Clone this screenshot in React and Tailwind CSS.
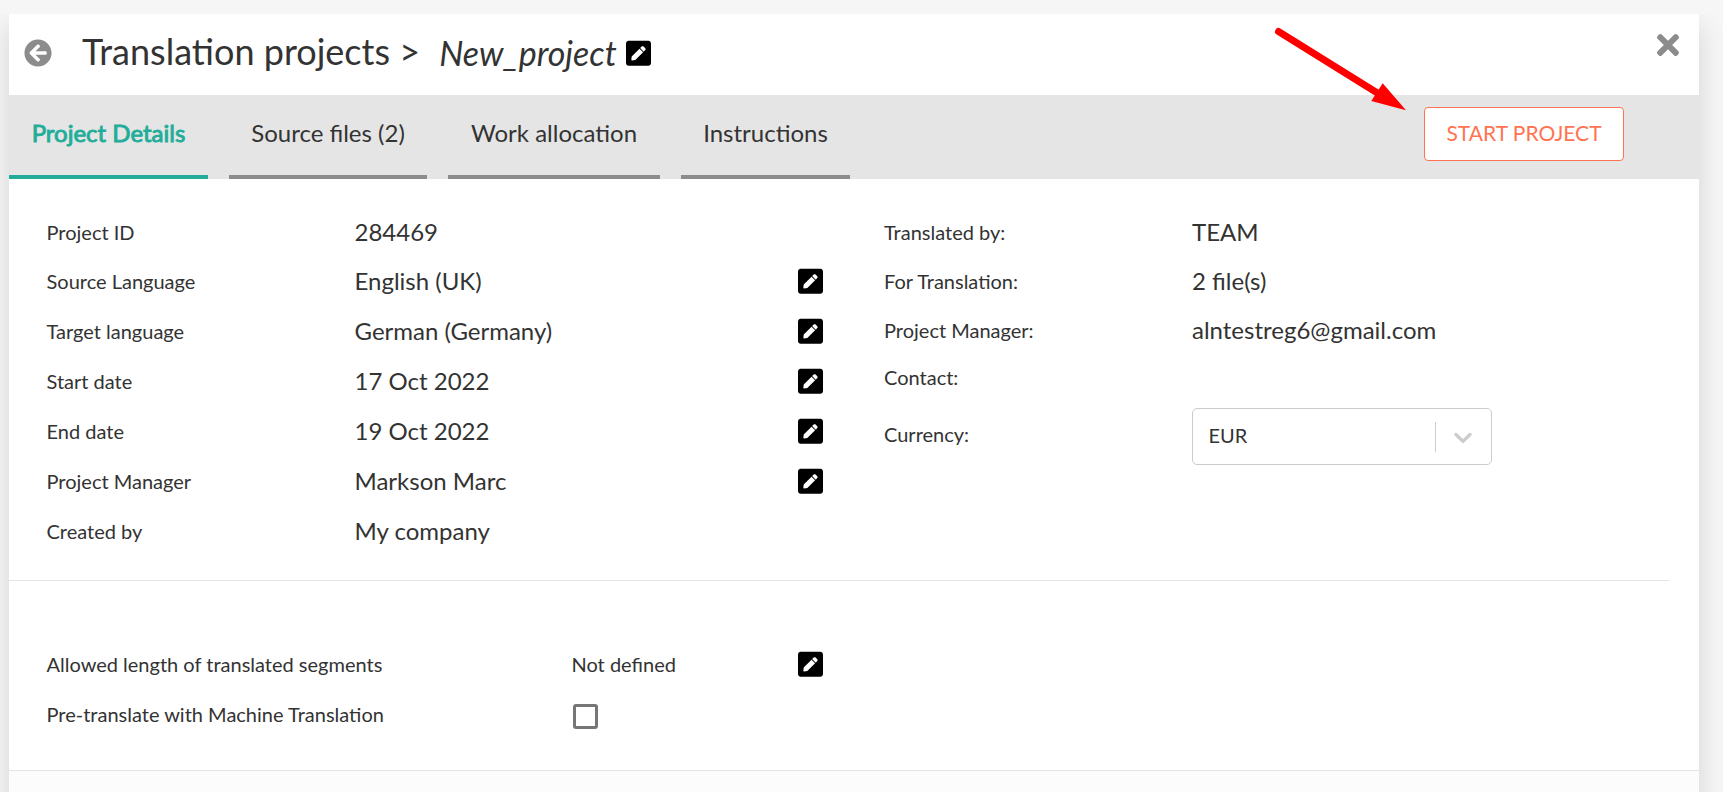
import { FaArrowCircleLeft, FaPenSquare, FaTimes } from "react-icons/fa";

const tabs = [
  { label: "Project Details", active: true, width: "w-[199px]" },
  { label: "Source files (2)", width: "w-[198px]" },
  { label: "Work allocation", width: "w-[212px]" },
  { label: "Instructions", width: "w-[169px]" },
];

const details = [
  { label: "Project ID", value: "284469", height: "h-[49px]" },
  { label: "Source Language", value: "English (UK)", editable: true, height: "h-[50px]" },
  { label: "Target language", value: "German (Germany)", editable: true, height: "h-[50px]" },
  { label: "Start date", value: "17 Oct 2022", editable: true, height: "h-[50px]" },
  { label: "End date", value: "19 Oct 2022", editable: true, height: "h-[50px]" },
  { label: "Project Manager", value: "Markson Marc", editable: true, height: "h-[50px]" },
  { label: "Created by", value: "My company", height: "h-[50px]" },
];

const summary = [
  { label: "Translated by:", value: "TEAM", height: "h-[49px]" },
  { label: "For Translation:", value: "2 file(s)", height: "h-[49px]" },
  { label: "Project Manager:", value: "alntestreg6@gmail.com", height: "h-[49px]" },
  { label: "Contact:", value: "", height: "h-[45px]" },
];

function EditButton() {
  return (
    <button className="ml-px shrink-0" aria-label="Edit">
      <FaPenSquare className="h-[28.6px] w-[25px] text-black" />
    </button>
  );
}

export default function App() {
  return (
    <div className="flex h-[792px] flex-col bg-[#f6f6f6] pt-[14px] font-['Lato',sans-serif] text-[20px] text-[#333]">
      <div className="min-h-0 flex-1 overflow-hidden pr-6 pl-[9px]">
        <div className="relative flex h-[900px] flex-col bg-white shadow-[0_12px_26px_rgba(0,0,0,0.14)]">
          <header className="flex h-[81px] shrink-0 items-start justify-between px-[15px]">
            <div className="flex h-[77px] items-center">
              <FaArrowCircleLeft className="size-7 text-[#8c8c8c]" />
              <h1 className="-mt-1 ml-[30px] text-[36px]">Translation projects &gt;</h1>
              <em className="mr-[8px] ml-[19px] text-[34px]">New_project</em>
              <span className="mt-px flex">
                <EditButton />
              </span>
            </div>
            <FaTimes className="mt-[15px] size-8 text-[#8c8c8c]" />
          </header>

          <nav className="flex h-[84px] shrink-0 items-start justify-between bg-[#e5e5e5] pr-[75px]">
            <div className="flex gap-[21px]">
              {tabs.map((t) => (
                <div
                  key={t.label}
                  className={`${t.width} flex h-[84px] justify-center border-b-4 text-[24px] leading-[75px] whitespace-nowrap ${
                    t.active
                      ? "border-[#22ad9a] text-[#22ad9a] [-webkit-text-stroke:0.9px_#22ad9a]"
                      : "border-[#8c8c8c]"
                  }`}
                >
                  {t.label}
                </div>
              ))}
            </div>
            <button className="mt-3 h-[54px] w-[200px] rounded-[4px] border border-[#ff7350] bg-white pb-[3px] text-[21px] text-[#ff7350]">
              START PROJECT
            </button>
          </nav>

          <section className="mr-[30px] flex h-[402px] shrink-0 border-b border-[#e5e5e5] pt-[28px] pl-[37.5px]">
            <div className="w-[837.5px]">
              {details.map((d) => (
                <div key={d.label} className={`${d.height} flex items-center`}>
                  <span className="w-[308px]">{d.label}</span>
                  <span className="w-[442px] text-[24px]">{d.value}</span>
                  {d.editable && <EditButton />}
                </div>
              ))}
            </div>
            <div>
              {summary.map((d) => (
                <div key={d.label} className={`${d.height} flex items-center`}>
                  <span className="w-[308px]">{d.label}</span>
                  <span className="text-[24px]">{d.value}</span>
                </div>
              ))}
              <div className="mt-[9px] flex items-start">
                <span className="w-[308px] pt-[11px]">Currency:</span>
                <div className="flex h-[57px] w-[300px] items-center rounded-[5px] border border-[#ccc] pl-[15.5px]">
                  <span className="flex-1 pb-[3px]">EUR</span>
                  <span className="mt-px h-[30px] w-px bg-[#ccc]" />
                  <svg viewBox="0 0 20 20" className="mt-px mr-[13px] ml-3 size-[30px] fill-[#ccc]">
                    <path d="M4.516 7.548c0.436-0.446 1.043-0.481 1.576 0l3.908 3.747 3.908-3.747c0.533-0.481 1.141-0.446 1.574 0 0.436 0.445 0.408 1.197 0 1.615-0.406 0.418-4.695 4.502-4.695 4.502-0.217 0.223-0.502 0.335-0.787 0.335s-0.57-0.112-0.789-0.335c0 0-4.287-4.084-4.695-4.502s-0.436-1.17 0-1.615z" />
                  </svg>
                </div>
              </div>
            </div>
          </section>

          <section className="flex h-[190px] shrink-0 flex-col border-b border-[#e5e5e5] pt-[58px] pl-[37.5px]">
            <div className="flex h-[50px] items-center">
              <span className="w-[525px]">Allowed length of translated segments</span>
              <span className="w-[225px]">Not defined</span>
              <EditButton />
            </div>
            <div className="flex h-[50px] items-center">
              <span className="w-[526px]">Pre-translate with Machine Translation</span>
              <span className="mt-1 size-[25px] rounded-[3px] border-3 border-[#767676]" />
            </div>
          </section>
          <div className="flex-1 bg-[#fcfcfc]" />

          <svg className="absolute top-[12px] left-[1260px] h-[88px] w-[140px]" viewBox="0 0 140 88">
            <path d="M9.500 5.500 L110 68" stroke="#f00" strokeWidth="7" strokeLinecap="round" />
            <path d="M137 84.300 L113.700 57.300 L102.300 75 Z" fill="#f00" />
          </svg>
        </div>
      </div>
    </div>
  );
}
